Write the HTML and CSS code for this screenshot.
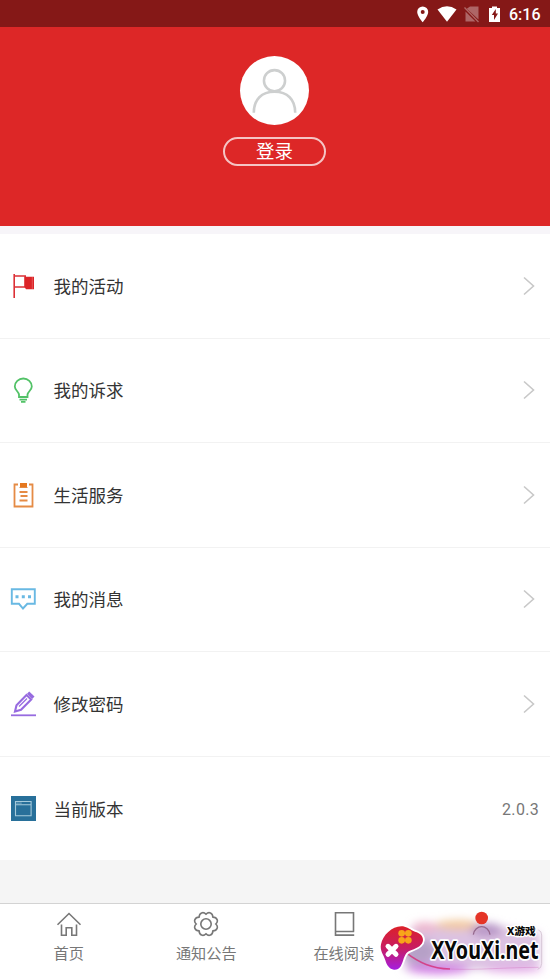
FILE: index.html
```html
<!DOCTYPE html>
<html lang="zh-CN">
<head>
<meta charset="utf-8">
<title>我的</title>
<link rel="stylesheet" href="styles.css">
</head>
<body>
<div class="app">
  <div class="status">
    <svg class="status-icons" viewBox="0 0 88 20">
      <path d="M9.700 2.500a5.500 5.500 0 0 0-5.500 5.500c0 4.100 5.500 10.300 5.500 10.300s5.500-6.200 5.500-10.300a5.500 5.500 0 0 0-5.500-5.500zm0 3.500a2 2 0 1 1 0 4 2 2 0 0 1 0-4z" fill="#fff" fill-rule="evenodd"/>
      <path d="M24.500 5.500q9.500-6.500 19 0L34 17.700z" fill="#fff"/>
      <path d="M57 2.500h8.500v13L53.800 4.800zM52.500 7.500 62.500 17.500h-10z" fill="#fff" opacity=".34"/>
      <path d="m51.500 3.500 14 14.500" stroke="#fff" stroke-width="1.300" opacity=".34"/>
      <path d="M76 4h3V2.500h5V4h3v14H76z" fill="#fff"/>
      <path d="m82.800 5-4 6h2.200v5l4-6.500h-2.200z" fill="#851817"/>
    </svg>
    <span class="clock">6:16</span>
  </div>
  <header class="profile">
    <div class="avatar">
      <svg viewBox="0 0 70 70" fill="none" stroke="#cdcfcf" stroke-width="2.600"><circle cx="35" cy="25" r="10.700"/><path d="M14 57.500C14 44 22 36.300 35 36.300S56 44 56 57.500"/></svg>
    </div>
    <div class="login">登录</div>
  </header>
  <main class="list">
    <div class="row">
      <svg class="icon" viewBox="0 0 26 26"><path d="M4.200 1v24M4.200 3h11v11h-11" fill="none" stroke="#dc3036" stroke-width="1.600"/><path d="M14.500 3.800H24v12.500h-8L14.500 14z" fill="#dc2428"/><path d="M22.300 4v12" stroke="#ee6a6a" stroke-width=".7"/></svg>
      <span class="label">我的活动</span><svg class="arrow" viewBox="0 0 12 20"><path d="m1 1.500 9.500 8.500L1 18.500"/></svg>
    </div>
    <div class="row">
      <svg class="icon" viewBox="0 0 26 26" fill="none" stroke="#52c267" stroke-width="1.800"><path d="M9 20v-2.500C8.500 14.500 4.800 13 4.800 9.500a8.500 8 0 0 1 17 0c0 3.500-3.800 5-4.300 8V20zM9.500 22.700h7.500M11 24.800h4.500"/></svg>
      <span class="label">我的诉求</span><svg class="arrow" viewBox="0 0 12 20"><path d="m1 1.500 9.500 8.500L1 18.500"/></svg>
    </div>
    <div class="row">
      <svg class="icon" viewBox="0 0 26 26" fill="none" stroke="#e58b45" stroke-width="1.800"><path d="M8 2.500H4.500v22h18v-22H19M9.500 10h8M10.500 14h7M9.500 18.500h8"/><path d="M10 1h7v4h-7z" fill="#e5781f" stroke="none"/><path d="M9.500 5.500h8" stroke-width="1"/></svg>
      <span class="label">生活服务</span><svg class="arrow" viewBox="0 0 12 20"><path d="m1 1.500 9.500 8.500L1 18.500"/></svg>
    </div>
    <div class="row">
      <svg class="icon" viewBox="0 0 26 26"><path d="M1.800 3.300h23v14.500h-7.500l-4.300 4.700-4-4.700H1.800z" fill="none" stroke="#69b9e3" stroke-width="1.900"/><path d="M5.500 9.200h3v3h-3zM11.800 9.200h3v3h-3zM18 9.200h3v3h-3z" fill="#69b9e3"/></svg>
      <span class="label">我的消息</span><svg class="arrow" viewBox="0 0 12 20"><path d="m1 1.500 9.500 8.500L1 18.500"/></svg>
    </div>
    <div class="row">
      <svg class="icon" viewBox="0 0 26 26" fill="none" stroke="#976be0" stroke-width="2.100"><path d="m5 20.500 1.500-6.300L16.500 4l4.700 4.500L11 18.800z"/><path d="m9 15.500 8-8" stroke-width="1.300"/><path d="m17 2.800 2.200-2.200 5.300 5-2.300 2.300z" fill="#976be0" stroke="none"/><path d="M1 24.300h25" stroke-width="1.800"/></svg>
      <span class="label">修改密码</span><svg class="arrow" viewBox="0 0 12 20"><path d="m1 1.500 9.500 8.500L1 18.500"/></svg>
    </div>
    <div class="row">
      <svg class="icon" viewBox="0 0 26 26"><path d="M1 1h25v25H1z" fill="#28709a"/><path d="M5.500 6.500h15.600v14.300H5.500zM5.500 9.800h15.600" fill="none" stroke="#a5cadb" stroke-width="1.100"/><path d="M6.500 8.100h5" stroke="#a5cadb" stroke-dasharray="1.200 .7"/></svg>
      <span class="label">当前版本</span><span class="version">2.0.3</span>
    </div>
  </main>
  <nav class="tabs">
    <div class="tab"><svg viewBox="0 0 26 26"><path d="M1.500 13.800 13 2.500l11.500 11.300M5.500 13.500v10.800h4.700v-7.500h5.600v7.500h4.700V13.500"/></svg><span>首页</span></div>
    <div class="tab"><svg viewBox="0 0 26 26"><circle cx="13" cy="13" r="5.200"/><path d="M13 3.200C15.800.200 19.700 1.800 19.900 6.100 24.200 6.300 25.800 10.200 22.800 13 25.800 15.800 24.200 19.700 19.900 19.900 19.700 24.200 15.800 25.800 13 22.800 10.200 25.800 6.300 24.200 6.100 19.900 1.800 19.700.200 15.800 3.200 13 .200 10.200 1.800 6.300 6.100 6.100 6.300 1.800 10.200.200 13 3.200z"/></svg><span>通知公告</span></div>
    <div class="tab"><svg viewBox="0 0 26 26"><path d="M22.500 20.500V1.800h-18v22.300h18.700M4.500 20.500h18.700"/></svg><span>在线阅读</span></div>
    <div class="tab"></div>
  </nav>
  <svg class="watermark" viewBox="0 0 540 237">
    <defs>
      <linearGradient id="pad" x1="0" y1="0" x2="0" y2="1"><stop offset="0" stop-color="#dc2029"/><stop offset=".5" stop-color="#c81d62"/><stop offset="1" stop-color="#a51de0"/></linearGradient>
      <filter id="glow" x="-30%" y="-50%" width="160%" height="200%"><feGaussianBlur stdDeviation="13"/></filter>
    </defs>
    <g filter="url(#glow)">
      <path d="M125 80H395L510 100V195L380 210H100z" fill="#dcc2e2"/>
      <ellipse cx="145" cy="155" rx="55" ry="38" fill="#9d88b5" opacity=".6"/>
      <ellipse cx="265" cy="75" rx="70" ry="15" fill="#f2c89d"/>
      <ellipse cx="350" cy="90" rx="48" ry="20" fill="#b795c6"/>
      <ellipse cx="205" cy="207" rx="95" ry="14" fill="#cf75e3"/>
      <ellipse cx="430" cy="207" rx="90" ry="10" fill="#e3a4e7"/>
      <ellipse cx="165" cy="82" rx="38" ry="15" fill="#eeb5cc"/>
    </g>
    <path d="M310 104c4-32 46-32 50 0" fill="none" stroke="#94678c" stroke-width="4"/>
    <circle cx="335" cy="54" r="19" fill="#e53426"/>
    <path d="M108 158c40 31 77 47 132 49" fill="none" stroke="#d62d77" stroke-width="5" opacity=".8"/>
    <path d="M240 207c85 4 165-5 266-5" fill="none" stroke="#c65ab0" stroke-width="3" opacity=".3"/>
    <path d="M505 90q10 3 10 15v85q0 15-12 18" fill="none" stroke="#c7b4c6" stroke-width="2"/>
    <path d="M94 79c-28 0-56 27-61 54-4 20 8 31 13 48 4 14 12 27 26 28 18 1 22-13 27-27 7-20 9-26 26-32 18-6 33-15 34-30 0-17-16-22-29-27-13-6-22-14-36-14z" fill="url(#pad)" stroke="#fff" stroke-width="11" paint-order="stroke"/>
    <g fill="#f8a51a"><circle cx="95" cy="100" r="10"/><circle cx="115" cy="100" r="10"/><circle cx="95" cy="121" r="10"/><circle cx="115" cy="121" r="10"/></g>
    <path d="m54 139 24 24m0-24-24 24" stroke="#fff" stroke-width="15" stroke-linecap="round"/>
    <text class="brand" x="184" y="178" textLength="322" lengthAdjust="spacingAndGlyphs">XYouXi.net</text>
    <text class="brand-cn" x="411" y="105" textLength="86" lengthAdjust="spacingAndGlyphs">X游戏</text>
  </svg>
</div>
</body>
</html>
```
FILE: styles.css
```css
* { box-sizing: border-box; }
body { margin: 0; background: #f5f5f5; font-family: Roboto, "Noto Sans CJK SC", sans-serif; }
.app { position: relative; display: flex; flex-direction: column; height: 979px; overflow: hidden; }
.status { display: flex; align-items: center; justify-content: flex-end; height: 27px; padding-right: 9px; background: #851817; color: #fff; }
.status-icons { width: 88px; height: 20px; margin-right: 8px; }
.clock { width: 32px; font-size: 16px; font-weight: 500; line-height: 27px; padding-top: 2px; white-space: nowrap; }
.profile { display: flex; flex-direction: column; align-items: center; height: 199px; padding: 29px 1px 0 0; background: #dd2727; }
.avatar { width: 69px; height: 69px; border-radius: 50%; background: #fff; }
.avatar svg { display: block; }
.login { width: 103px; height: 29px; margin-top: 12px; border: 2px solid #f5c4c4; border-radius: 15px; color: #fff; font-size: 18.500px; line-height: 27px; text-align: center; }
.list { padding-top: 8px; background: linear-gradient(#f7f5f9 8px, #fff 8px); }
.row { display: flex; align-items: center; height: 104.500px; padding: 0 12px 0 10px; border-bottom: 1px solid #f2f2f2; background: #fff; }
.row:last-child { border-bottom: 0; height: 103.500px; padding-right: 11px; }
.icon { width: 26px; height: 26px; margin-right: 17.500px; }
.label { flex: 1; padding-top: 2px; color: #333; font-size: 17.500px; line-height: 26px; }
.row:last-child .label { padding-top: 3px; }
.arrow { width: 12px; height: 20px; margin-right: 3px; fill: none; stroke: #c8c8c8; stroke-width: 1.600; }
.version { padding-top: 2px; color: #777; font-size: 16px; letter-spacing: .3px; }
.tabs { display: flex; height: 76px; margin-top: auto; border-top: 1px solid #d3d3d3; background: #fff; }
.tab { display: flex; flex: 1; flex-direction: column; align-items: center; padding-top: 7px; color: #777; font-size: 15.200px; line-height: 22px; }
.tab svg { width: 26px; height: 26px; margin-bottom: 6px; fill: none; stroke: #777; stroke-width: 1.600; }
.watermark { position: absolute; left: 370px; top: 900px; width: 180px; height: 79px; }
.brand, .brand-cn { font-family: "Noto Sans", "Noto Sans CJK SC", sans-serif; font-weight: 700; fill: #080808; stroke: #fff; stroke-width: 11px; stroke-linejoin: round; paint-order: stroke; }
.brand { font-size: 75px; }
.brand-cn { font-size: 32px; font-weight: 800; stroke-width: 8px; }
```
